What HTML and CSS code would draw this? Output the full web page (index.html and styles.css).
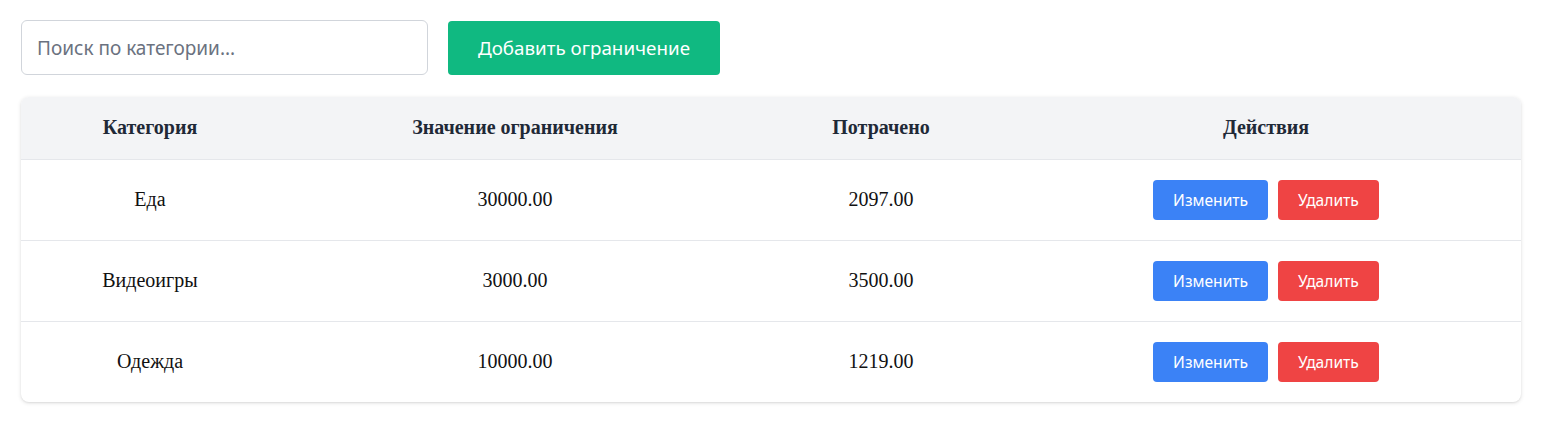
FILE: index.html
```html
<!DOCTYPE html>
<html lang="ru">
<head>
<meta charset="utf-8">
<title>Ограничения</title>
<link rel="stylesheet" href="styles.css">
</head>
<body>
<div class="page">
  <div class="toolbar">
    <input class="search" type="text" placeholder="Поиск по категории...">
    <button class="btn-add">Добавить ограничение</button>
  </div>
  <div class="table-wrap">
    <table class="limits">
      <colgroup>
        <col class="c1"><col class="c2"><col class="c3"><col class="c4">
      </colgroup>
      <thead>
        <tr><th>Категория</th><th>Значение ограничения</th><th>Потрачено</th><th>Действия</th></tr>
      </thead>
      <tbody>
        <tr><td>Еда</td><td>30000.00</td><td>2097.00</td><td><div class="actions"><button class="btn btn-edit">Изменить</button><button class="btn btn-del">Удалить</button></div></td></tr>
        <tr><td>Видеоигры</td><td>3000.00</td><td>3500.00</td><td><div class="actions"><button class="btn btn-edit">Изменить</button><button class="btn btn-del">Удалить</button></div></td></tr>
        <tr><td>Одежда</td><td>10000.00</td><td>1219.00</td><td><div class="actions"><button class="btn btn-edit">Изменить</button><button class="btn btn-del">Удалить</button></div></td></tr>
      </tbody>
    </table>
  </div>
</div>
</body>
</html>
```
FILE: styles.css
```css
* { box-sizing: border-box; }
html, body { margin: 0; background: #fff; }
.page {
  padding: 20px 43px 20px 21px;
  font-family: "Liberation Serif", serif;
}
.toolbar {
  display: flex;
  align-items: center;
  gap: 20px;
  margin-bottom: 22px;
}
.search {
  width: 407px;
  height: 55px;
  padding: 0 15px;
  border: 1px solid #d1d5db;
  border-radius: 6px;
  font-family: "Noto Sans", sans-serif;
  font-size: 19px;
  color: #111827;
  outline: none;
}
.search::placeholder { color: #6b7280; }
.btn-add {
  height: 54px;
  padding: 0 30px;
  border: none;
  border-radius: 4px;
  background: #10b981;
  color: #fff;
  font-family: "Noto Sans", sans-serif;
  font-size: 18.8px;
}
.table-wrap {
  width: 1500px;
  border-radius: 8px;
  overflow: hidden;
  box-shadow: 0 1px 4px rgba(0,0,0,0.12), 0 1px 2px rgba(0,0,0,0.06);
  background: #fff;
}
.limits {
  width: 100%;
  border-collapse: collapse;
  table-layout: fixed;
  font-size: 20px;
  color: #111;
}
.c1 { width: 258px; }
.c2 { width: 472px; }
.c3 { width: 260px; }
.c4 { width: 510px; }
.limits thead tr { background: #f3f4f6; }
.limits th {
  height: 62px;
  padding: 0;
  font-weight: bold;
  color: #1f2937;
  text-align: center;
  border-bottom: 1px solid #e5e7eb;
}
.limits td {
  height: 81px;
  padding: 0;
  text-align: center;
  border-bottom: 1px solid #e5e7eb;
}
.limits tbody tr:last-child td { border-bottom: none; }
.actions {
  display: flex;
  justify-content: center;
  gap: 10px;
}
.btn {
  height: 40px;
  padding: 0 20px;
  border: none;
  border-radius: 4px;
  color: #fff;
  font-family: "Noto Sans", sans-serif;
  font-size: 15.6px;
}
.btn-edit { background: #3b82f6; }
.btn-del { background: #ef4444; }
```
